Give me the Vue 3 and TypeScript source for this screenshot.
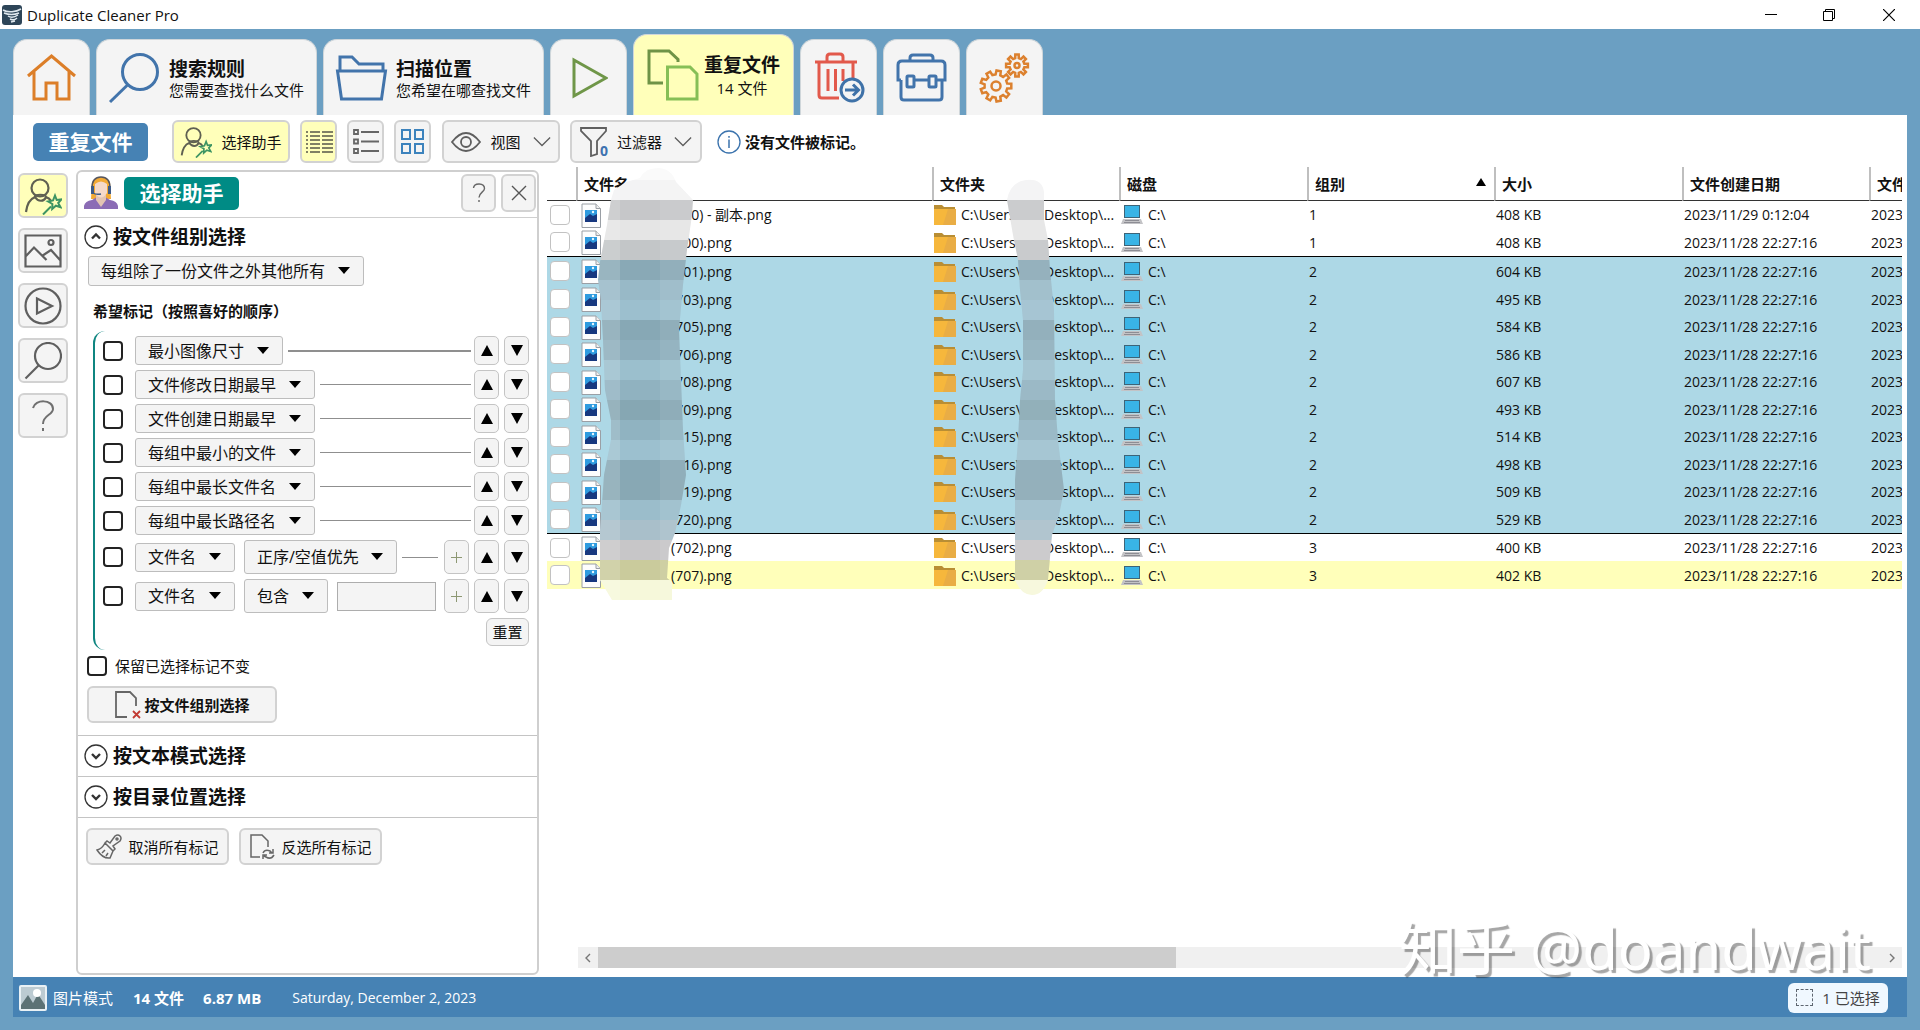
<script setup lang="ts">
import { ref } from 'vue'

interface FileRow {
  name: string
  size: string
  created: string
  selected?: boolean
}

interface FileGroup {
  id: number
  rows: FileRow[]
}

const defaultDate = '2023/11/28 22:27:16'
const row = (name: string, size: string, created = defaultDate, selected = false): FileRow => ({
  name,
  size,
  created,
  selected,
})

const groups: FileGroup[] = [
  { id: 1, rows: [row('(700) - 副本.png', '408 KB', '2023/11/29 0:12:04'), row('(700).png', '408 KB')] },
  {
    id: 2,
    rows: [
      row('(701).png', '604 KB'),
      row('(703).png', '495 KB'),
      row('(705).png', '584 KB'),
      row('(706).png', '586 KB'),
      row('(708).png', '607 KB'),
      row('(709).png', '493 KB'),
      row('(715).png', '514 KB'),
      row('(716).png', '498 KB'),
      row('(719).png', '509 KB'),
      row('(720).png', '529 KB'),
    ],
  },
  { id: 3, rows: [row('(702).png', '400 KB'), row('(707).png', '402 KB', defaultDate, true)] },
]

const simpleRules = ['最小图像尺寸', '文件修改日期最早', '文件创建日期最早', '每组中最小的文件', '每组中最长文件名', '每组中最长路径名']

const keyword = ref('')

/* Outline of a cog wheel as an SVG path. */
function gear(cx: number, cy: number, outer: number, inner: number, teeth: number): string {
  const step = (Math.PI * 2) / teeth
  const shape: [number, number][] = [
    [-0.3, inner],
    [-0.2, outer],
    [0.2, outer],
    [0.3, inner],
  ]
  const points: string[] = []
  for (let i = 0; i < teeth; i++) {
    for (const [offset, radius] of shape) {
      const angle = (i + offset) * step
      points.push(`${(cx + Math.cos(angle) * radius).toFixed(1)} ${(cy + Math.sin(angle) * radius).toFixed(1)}`)
    }
  }
  return `M${points.join('L')}Z`
}

/* Rows of the pixelated strips that hide private parts of the paths. */
const mosaic = [
  '#fafafa', '#f3f3f4', '#c6c7c9', '#e5e5e5', '#c3c6c8', '#89a9b6', '#98b9c7', '#9cbfce', '#87a8b5', '#8daebc',
  '#9bbfcd', '#90b2c0', '#86a7b3', '#90b3c1', '#9cc0cf', '#87a8b5', '#88a8b4', '#9bbdcb', '#a9bfca', '#c7c6c8',
  '#cacb9c', '#f6f8da',
]
</script>

<template>
  <div class="window">
    <svg class="defs" aria-hidden="true">
      <symbol id="wizard" viewBox="0 0 38 38">
        <g fill="none" stroke="#5f6052" stroke-width="2.2">
          <circle cx="16" cy="11" r="8.5" />
          <path d="M2 35C3 27 6 22 11 20C14 25 20 25 22 20C25 21 26 22 27 24M11 20C10 17 22 17 22 20" />
        </g>
        <g fill="none" stroke="#3d9463" stroke-width="2">
          <path d="M31 18.500l1.700 4.500 4.800-.6-3.300 3.600 2.300 4.200-4.600-1.500-3.700 3.300.2-5-4.300-2.500 4.900-1z" />
          <path d="M27 29.500L19 37.500" />
        </g>
      </symbol>
      <symbol id="image-file" viewBox="0 0 20 25">
        <path d="M1 1h14l4.500 4.500V24.500H1z" fill="#fdfdfd" stroke="#9a9fa5" />
        <path d="M15 1v4.500h4.500" fill="#eee" stroke="#9a9fa5" />
        <path d="M4 7h12v12H4z" fill="#2f9bdf" />
        <path d="M4 15l5-4 3 2 4-2v8H4z" fill="#17387f" />
        <circle cx="12" cy="9" r="1.200" fill="#e7f6ff" />
      </symbol>
      <symbol id="folder" viewBox="0 0 22 20">
        <path d="M0 0h8l2 2h11v5H0z" fill="#b98e34" />
        <path d="M0 4h22v16H0z" fill="#f6b73c" />
        <path d="M14 4h8v16H9z" fill="#e9ad45" />
      </symbol>
      <symbol id="laptop" viewBox="0 0 22 20">
        <path d="M3 0h16v13H3z" fill="#3d6478" />
        <path d="M4 1h14v11H4z" fill="#39b4e6" />
        <path d="M2 14h18l2 5H0z" fill="#c3c3c6" />
        <path d="M4 15.500h14M3 17.500h16" stroke="#8d8d94" />
      </symbol>
      <symbol id="chevron" viewBox="0 0 20 12">
        <path d="M1 1.500L10 10.500 19 1.500" fill="none" stroke="#5d5d5d" stroke-width="1.400" />
      </symbol>
    </svg>

    <header class="title-bar">
      <svg class="logo" viewBox="0 0 20 20" aria-hidden="true">
        <rect width="20" height="20" rx="3" fill="#2d4558" />
        <path d="M1 5C6 8 14 7 19 4M2 8C7 10 12 10 17 8M6 11C9 13 13 12 16 10M8 14c2 1 5 1 7-1M9 17l4-1" fill="none" stroke="#dfe8ee" stroke-width="1.500" />
      </svg>
      <h1>Duplicate Cleaner Pro</h1>
      <div class="window-controls">
        <button type="button" aria-label="最小化"><svg width="12" height="12" viewBox="0 0 12 12"><path d="M0 5.500H12" stroke="#000" /></svg></button>
        <button type="button" aria-label="还原"><svg width="12" height="12" viewBox="0 0 12 12"><path d="M.5 2.500H9.500V11.500H.5ZM2.500 2.500V.5H11.500V9.500H9.500" fill="none" stroke="#000" /></svg></button>
        <button type="button" aria-label="关闭"><svg width="12" height="12" viewBox="0 0 12 12"><path d="M0 0L12 12M12 0L0 12" stroke="#000" stroke-width="1.200" /></svg></button>
      </div>
    </header>

    <nav class="tabs">
      <button type="button" class="tab icon-only" aria-label="主页">
        <svg width="52" height="50" viewBox="0 0 52 50" fill="none" stroke="#dc7e28" stroke-width="3"><path d="M2 23L25.500 3 49 23M8 19V46H20V30H31V46H43V19" /></svg>
      </button>
      <button type="button" class="tab wide">
        <svg width="54" height="54" viewBox="0 0 54 54" fill="none" stroke="#4274ab" stroke-width="3"><circle cx="32" cy="21" r="17.500" /><path d="M19.500 34L2 51" /></svg>
        <span class="tab-text"><strong>搜索规则</strong><span>您需要查找什么文件</span></span>
      </button>
      <button type="button" class="tab wide">
        <svg width="54" height="54" viewBox="0 0 54 54" fill="none" stroke="#4274ab" stroke-width="3"><path d="M5 20V6H17L24 13H48V20M2.500 20H50.500L46.500 48H6.500Z" /></svg>
        <span class="tab-text"><strong>扫描位置</strong><span>您希望在哪查找文件</span></span>
      </button>
      <button type="button" class="tab icon-only" aria-label="开始扫描">
        <svg width="38" height="42" viewBox="0 0 38 42" fill="none" stroke="#6f9648" stroke-width="3"><path d="M4 3L36 21 4 39Z" /></svg>
      </button>
      <button type="button" class="tab active">
        <svg width="52" height="52" viewBox="0 0 52 52" fill="none" stroke-width="3"><path d="M16 34H2V2H22L31 10.500V13" stroke="#6f9346" /><path d="M20.500 18H43L50 25V50H20.500Z" stroke="#86bf56" /></svg>
        <span class="tab-text centered"><strong>重复文件</strong><span>14 文件</span></span>
      </button>
      <button type="button" class="tab icon-only" aria-label="删除文件">
        <svg width="52" height="52" viewBox="0 0 52 52" fill="none" stroke="#e2594b" stroke-width="3"><path d="M2 10H44M14 10V5q0-3 3-3h10q3 0 3 3V10M6 10V43q0 3 3 3H26M40 10V26M15 17V39M22.500 17V39M30 17V29" /><g stroke="#3f72a8"><circle cx="39" cy="38" r="11" fill="#f4f4f4" /><path d="M32 38H45M40 32.500L45.500 38 40 43.500" /></g></svg>
      </button>
      <button type="button" class="tab icon-only" aria-label="工具">
        <svg width="52" height="50" viewBox="0 0 52 50" fill="none" stroke="#4274ab" stroke-width="3"><path d="M14 8V5q0-3 3-3H34q3 0 3 3V8M5 27H2V12q0-4 4-4H45q4 0 4 4V27H41M18 27H33M5 27V44q0 3 3 3H43q3 0 3-3V27" /><rect x="11" y="23" width="7" height="11" rx="1" /><rect x="33" y="23" width="7" height="11" rx="1" /></svg>
      </button>
      <button type="button" class="tab icon-only" aria-label="选项">
        <svg width="52" height="52" viewBox="0 0 52 52" fill="none" stroke="#dc812f" stroke-width="2.500"><path :d="gear(17, 34, 15.5, 11.5, 9)" /><circle cx="17" cy="34" r="4.500" /><path :d="gear(38, 13.5, 11, 7.500, 8)" /><circle cx="38" cy="13.500" r="2.500" /></svg>
      </button>
    </nav>

    <main class="content">
      <div class="toolbar">
        <h2 class="badge blue">重复文件</h2>
        <button type="button" class="tool on assistant"><svg width="32" height="32"><use href="#wizard" /></svg>选择助手</button>
        <button type="button" class="tool square on" aria-label="列表">
          <svg width="28" height="22" viewBox="0 0 28 22" stroke="#57574a" stroke-width="1.500"><path v-for="y in 6" :key="y" :d="`M1 ${y * 4 - 3}h2M5 ${y * 4 - 3}h10M17 ${y * 4 - 3}h11`" /></svg>
        </button>
        <button type="button" class="tool square" aria-label="详细列表">
          <svg width="28" height="26" viewBox="0 0 28 26" fill="none" stroke="#666" stroke-width="1.800"><path v-for="y in 3" :key="y" :d="`M2 ${y * 9.5 - 8.5}h4v4h-4zM9 ${y * 9.5 - 6.5}h18`" /></svg>
        </button>
        <button type="button" class="tool square" aria-label="缩略图">
          <svg width="26" height="27" viewBox="0 0 26 27" fill="none" stroke="#3c83bd" stroke-width="2"><path d="M2 2h8v9H2zM15 2h8v9h-8zM2 16h8v9H2zM15 16h8v9h-8z" /></svg>
        </button>
        <button type="button" class="tool view">
          <svg width="30" height="22" viewBox="0 0 30 22" fill="none" stroke="#5f5f5f" stroke-width="1.800"><path d="M1 11Q15-7 29 11Q15 29 1 11Z" /><circle cx="15" cy="11" r="5" /></svg>
          视图
          <svg class="chev" width="18" height="11"><use href="#chevron" /></svg>
        </button>
        <button type="button" class="tool filter">
          <span class="funnel">
            <svg width="28" height="30" viewBox="0 0 28 30" fill="none" stroke="#5f5f5f" stroke-width="1.800"><path d="M1 1H26V4L17 14V27L11 29V14L1 4Z" /></svg>
            <b>0</b>
          </span>
          过滤器
          <svg class="chev" width="18" height="11"><use href="#chevron" /></svg>
        </button>
        <p class="notice">
          <svg width="24" height="24" viewBox="0 0 24 24" fill="none" stroke="#3b73ad"><circle cx="12" cy="12" r="11" stroke-width="1.300" /><path d="M12 9.500V18M12 6V7.800" stroke-width="1.500" /></svg>
          <strong>没有文件被标记。</strong>
        </p>
      </div>

      <div class="body">
        <aside class="rail">
          <button type="button" class="rail-button on" aria-label="选择助手"><svg width="38" height="38"><use href="#wizard" /></svg></button>
          <button type="button" class="rail-button" aria-label="图像预览">
            <svg width="38" height="34" viewBox="0 0 38 34" fill="none" stroke="#5f5f5f" stroke-width="2.200"><path d="M1.500 1.500H36.500V32.500H1.500ZM2 22L10 13.500 22.500 26M18 22L27 16 36 26" /><circle cx="27" cy="8.500" r="2.500" /></svg>
          </button>
          <button type="button" class="rail-button" aria-label="播放">
            <svg width="38" height="38" viewBox="0 0 38 38" fill="none" stroke="#5f5f5f" stroke-width="2.200"><circle cx="19" cy="19" r="17.500" /><path d="M13 11.500L28 19 13 26.500Z" /></svg>
          </button>
          <button type="button" class="rail-button" aria-label="搜索">
            <svg width="38" height="38" viewBox="0 0 38 38" fill="none" stroke="#5f5f5f" stroke-width="2.200"><circle cx="24" cy="14" r="13" /><path d="M14.500 23.500L1.500 36.500" /></svg>
          </button>
          <button type="button" class="rail-button" aria-label="帮助">
            <svg width="24" height="32" viewBox="0 0 24 32" fill="none" stroke="#707070" stroke-width="2"><path d="M2 8C4-1 22-1 22 9C22 15 12 15 12 24M12 28V31" /></svg>
          </button>
        </aside>

        <section class="panel">
          <header class="panel-head">
            <svg class="avatar" width="36" height="34" viewBox="0 0 36 34" aria-hidden="true">
              <path d="M9 6Q18-4 27 6L28 23H8Z" fill="#f3aa35" />
              <path d="M1 33V30Q2 25 9 24L14 21H22L27 24Q34 25 35 30V33Z" fill="#8b6cb5" />
              <path d="M13 19H23V24L18 31L13 24Z" fill="#e3c4b2" />
              <path d="M12 8Q18 3 24 8V17Q18 26 12 17Z" fill="#f5d9c9" />
              <path d="M9 12Q9 1 18 1T27 12" fill="none" stroke="#56565e" stroke-width="1.500" />
              <path d="M8 10h3v8H8zM25 10h3v8h-3z" fill="#3d5a86" />
              <path d="M10 17Q13 19 18 18" fill="none" stroke="#3d5a86" stroke-width="1.500" />
            </svg>
            <h2 class="badge teal">选择助手</h2>
            <div class="panel-actions">
              <button type="button" aria-label="帮助"><svg width="14" height="20" viewBox="0 0 14 20" fill="none" stroke="#666" stroke-width="1.400"><path d="M1.500 5C2-.5 12.500-.5 12.500 5.500C12.500 9 7 9.500 7 14.500M7 17V19" /></svg></button>
              <button type="button" aria-label="关闭"><svg width="16" height="16" viewBox="0 0 16 16"><path d="M1 1L15 15M15 1L1 15" stroke="#555" stroke-width="1.400" /></svg></button>
            </div>
          </header>

          <div class="section open">
            <button type="button" class="section-title">
              <svg width="24" height="24" viewBox="0 0 24 24" fill="none" stroke="#333"><circle cx="12" cy="12" r="11" stroke-width="1.300" /><path d="M8 13.500L12 9.500 16 13.500" stroke-width="2.400" /></svg>
              按文件组别选择
            </button>
            <label class="picker main-picker">
              <select aria-label="标记方式"><option>每组除了一份文件之外其他所有</option></select>
            </label>
            <h3>希望标记（按照喜好的顺序）</h3>

            <div class="rules">
              <div v-for="(rule, i) in simpleRules" :key="rule" class="rule">
                <input type="checkbox" class="check" :aria-label="rule" />
                <label class="picker"><select :aria-label="`规则 ${i + 1}`"><option>{{ rule }}</option></select></label>
                <span class="line" :class="{ strong: i === 0 }"></span>
                <button type="button" class="move" aria-label="上移"><i class="up"></i></button>
                <button type="button" class="move" aria-label="下移"><i class="down"></i></button>
              </div>
              <div class="rule tall">
                <input type="checkbox" class="check" aria-label="文件名排序" />
                <label class="picker"><select aria-label="排序字段"><option>文件名</option></select></label>
                <label class="picker full"><select aria-label="排序方式"><option>正序/空值优先</option></select></label>
                <span class="line"></span>
                <button type="button" class="move plus" aria-label="添加"><svg width="11" height="11" viewBox="0 0 11 11"><path d="M5.500 0V11M0 5.500H11" stroke="#8d9873" /></svg></button>
                <button type="button" class="move" aria-label="上移"><i class="up"></i></button>
                <button type="button" class="move" aria-label="下移"><i class="down"></i></button>
              </div>
              <div class="rule tall">
                <input type="checkbox" class="check" aria-label="文件名条件" />
                <label class="picker"><select aria-label="条件字段"><option>文件名</option></select></label>
                <label class="picker full"><select aria-label="条件"><option>包含</option></select></label>
                <input v-model="keyword" type="text" class="keyword" aria-label="关键字" />
                <button type="button" class="move plus" aria-label="添加"><svg width="11" height="11" viewBox="0 0 11 11"><path d="M5.500 0V11M0 5.500H11" stroke="#8d9873" /></svg></button>
                <button type="button" class="move" aria-label="上移"><i class="up"></i></button>
                <button type="button" class="move" aria-label="下移"><i class="down"></i></button>
              </div>
              <button type="button" class="reset">重置</button>
            </div>

            <label class="keep"><input type="checkbox" class="check" />保留已选择标记不变</label>
            <button type="button" class="action apply">
              <svg width="28" height="30" viewBox="0 0 28 30" fill="none"><path d="M13 27H2V2H16L22 8V16" stroke="#666" stroke-width="1.800" /><path d="M19 21L26 28M26 21L19 28" stroke="#c23b33" stroke-width="1.800" /></svg>
              <strong>按文件组别选择</strong>
            </button>
          </div>

          <div class="section">
            <button type="button" class="section-title">
              <svg width="24" height="24" viewBox="0 0 24 24" fill="none" stroke="#333"><circle cx="12" cy="12" r="11" stroke-width="1.300" /><path d="M8 10L12 14 16 10" stroke-width="2.400" /></svg>
              按文本模式选择
            </button>
          </div>
          <div class="section">
            <button type="button" class="section-title">
              <svg width="24" height="24" viewBox="0 0 24 24" fill="none" stroke="#333"><circle cx="12" cy="12" r="11" stroke-width="1.300" /><path d="M8 10L12 14 16 10" stroke-width="2.400" /></svg>
              按目录位置选择
            </button>
          </div>

          <div class="mark-actions">
            <button type="button" class="action">
              <svg width="26" height="26" viewBox="0 0 26 26" fill="none" stroke="#666" stroke-width="1.500"><path d="M9 9L17 17L14 24Q7 25 1 16Q6 15 9 9ZM9 9L11 7 14 9 19 2Q22 0 24 2T24 7L17 12L19 15 17 17M6 19L9 16M10 22L12 19" /><circle cx="21" cy="5" r="1" /></svg>
              取消所有标记
            </button>
            <button type="button" class="action">
              <svg width="26" height="27" viewBox="0 0 26 27" fill="none" stroke="#666" stroke-width="1.500"><path d="M11 24H2V2H13L19 8V14M14 20Q16 16 21 18L23 20M24 16V20H20M25 22Q22 27 17 24L15 23M14 26V22H18" /></svg>
              反选所有标记
            </button>
          </div>
        </section>

        <section class="results">
          <div class="table-wrap">
            <table>
              <colgroup>
                <col class="c-check" /><col class="c-name" /><col class="c-a" /><col class="c-b" /><col class="c-a" /><col class="c-b" /><col class="c-a" /><col class="c-b" />
              </colgroup>
              <thead>
                <tr>
                  <th></th>
                  <th>文件名</th>
                  <th>文件夹</th>
                  <th>磁盘</th>
                  <th><span class="sorted">组别<i></i></span></th>
                  <th>大小</th>
                  <th>文件创建日期</th>
                  <th>文件修改日期</th>
                </tr>
              </thead>
              <tbody v-for="group in groups" :key="group.id" :class="`group-${group.id}`">
                <tr v-for="file in group.rows" :key="file.name" :class="{ selected: file.selected }">
                  <td class="cell-check"><input type="checkbox" :aria-label="file.name" /></td>
                  <td><span class="cell file"><svg width="20" height="25"><use href="#image-file" /></svg>{{ file.name }}</span></td>
                  <td><span class="cell folder"><svg width="22" height="20"><use href="#folder" /></svg><span class="root">C:\Users\</span>Desktop\...</span></td>
                  <td><span class="cell disk"><svg width="22" height="20"><use href="#laptop" /></svg>C:\</span></td>
                  <td>{{ group.id }}</td>
                  <td>{{ file.size }}</td>
                  <td>{{ file.created }}</td>
                  <td>{{ defaultDate }}</td>
                </tr>
              </tbody>
            </table>
            <svg class="mosaic" width="540" height="440" viewBox="547 167 540 440" aria-hidden="true">
              <defs>
                <clipPath id="strip-a"><path d="M614 190L626 182 640 178Q645 168 658 168T676 182L693 200 692 215 687 250 683 285 679 330 681 380 683 430 686 475 681 505 675 533 669 548 667 578 672 582V600H612L600 580V530L603 490 604 475 611 440 611 420 605 390 603 340 601 300 598 280 600 262 607 225 611 200Z" /></clipPath>
                <clipPath id="strip-b"><path d="M1007 200Q1010 182 1026 180T1044 192V220L1048 240 1050 270 1054 310 1055 400 1058 440 1064 490 1059 515 1052 535 1048 580Q1043 595 1032 595T1015 580V480L1018 440 1020 400 1023 370V320L1020 290 1018 260 1013 235Z" /></clipPath>
              </defs>
              <g v-for="strip in ['a', 'b']" :key="strip" :clip-path="`url(#strip-${strip})`">
                <rect v-for="(fill, i) in mosaic" :key="i" :x="strip === 'a' ? 590 : 1000" :y="160 + i * 20" width="110" height="20" :fill="fill" />
                <rect v-if="strip === 'a'" x="590" y="180" width="30" height="420" fill="#fff" opacity="0.140" />
                <rect v-if="strip === 'a'" x="660" y="180" width="40" height="420" fill="#fff" opacity="0.080" />
                <rect v-if="strip === 'b'" x="1000" y="160" width="80" height="440" fill="#fff" opacity="0.100" />
              </g>
            </svg>
          </div>
          <div class="scrollbar" aria-hidden="true">
            <svg width="20" height="10" viewBox="0 0 20 10" fill="none" stroke="#777" stroke-width="1.400"><path d="M12 1L8 5 12 9" /></svg>
            <div class="track"><div class="thumb"></div></div>
            <svg width="20" height="10" viewBox="0 0 20 10" fill="none" stroke="#777" stroke-width="1.400"><path d="M8 1L12 5 8 9" /></svg>
          </div>
        </section>
      </div>
      <p class="watermark">知乎 @doandwait</p>
    </main>

    <footer class="status">
      <svg width="28" height="26" viewBox="0 0 28 26" aria-hidden="true"><rect x="1" y="1" width="26" height="24" rx="1" fill="#bccbd2" stroke="#e9f1f5" stroke-width="2" /><path d="M2 24V20L9 10 14 18 19 9 26 20V24Z" fill="#5c7275" /><circle cx="18" cy="8" r="4" fill="#fff" /></svg>
      <span>图片模式</span>
      <strong>14 文件</strong>
      <strong>6.87 MB</strong>
      <time>Saturday, December 2, 2023</time>
      <button type="button" class="selection"><i></i>1 已选择</button>
    </footer>
  </div>
</template>

<style>
body {
  margin: 0;
}
</style>

<style scoped>
* {
  box-sizing: border-box;
}

.window {
  display: flex;
  flex-direction: column;
  min-height: 100vh;
  padding-bottom: 13px;
  background: #6b9fc2;
  color: #111;
  font: 15px/20px 'Open Sans', 'Noto Sans CJK SC', sans-serif;
}

button,
select,
input {
  margin: 0;
  font: inherit;
  color: inherit;
}

button {
  display: flex;
  align-items: center;
  justify-content: center;
  padding: 0;
  border: 2px solid #d2d2d2;
  border-radius: 6px;
  background: #f4f4f4;
  white-space: nowrap;
}

h1,
h2,
h3,
p {
  margin: 0;
}

svg {
  flex: none;
  display: block;
}

.defs {
  position: absolute;
  width: 0;
  height: 0;
}

.title-bar {
  display: flex;
  align-items: center;
  height: 29px;
  padding-left: 2px;
  background: #fff;
}

.logo {
  width: 20px;
  height: 20px;
  margin-right: 5px;
}

h1 {
  font-size: 15px;
  font-weight: 400;
}

.window-controls {
  display: flex;
  margin-left: auto;
}

.window-controls button {
  width: 58px;
  height: 28px;
  border: 0;
  background: none;
}

.window-controls button:last-child {
  width: 62px;
}

.tabs {
  display: flex;
  align-items: flex-end;
  gap: 6px;
  height: 86px;
  padding: 0 13px;
}

.tab {
  height: 76px;
  border: 1px solid #cfd6da;
  border-bottom: 0;
  border-radius: 14px 14px 0 0;
}

.tab.icon-only {
  width: 77px;
}

.tab.wide {
  justify-content: flex-start;
  gap: 7px;
  width: 221px;
  padding-left: 11px;
}

.tab.active {
  gap: 5px;
  width: 161px;
  height: 81px;
  background: #ffffba;
}

.tab-text {
  display: flex;
  flex-direction: column;
  padding-top: 2px;
  text-align: left;
}

.tab-text.centered {
  gap: 2px;
  text-align: center;
}

.tab-text strong {
  font-size: 19px;
  line-height: 22px;
}

.content {
  position: relative;
  display: flex;
  flex: 1;
  flex-direction: column;
  margin: 0 13px;
  background: #fff;
}

.toolbar {
  display: flex;
  align-items: center;
  gap: 10px;
  padding: 5px 0 0 20px;
}

.badge {
  display: flex;
  align-items: center;
  justify-content: center;
  width: 115px;
  border-radius: 5px;
  color: #fff;
  font-size: 21px;
}

.badge.blue {
  height: 38px;
  margin-right: 14px;
  background: #4682b4;
}

.badge.teal {
  height: 33px;
  background: #008b85;
}

.tool {
  gap: 9px;
  height: 43px;
}

.on {
  background: #ffffba;
}

.tool.assistant {
  width: 118px;
}

.tool.square {
  width: 37px;
}

.tool.view {
  width: 118px;
  margin-left: 1px;
}

.tool.filter {
  width: 132px;
}

.tool .chev {
  margin-left: 3px;
}

.funnel {
  position: relative;
}

.funnel b {
  position: absolute;
  right: 0;
  bottom: -4px;
  color: #3d72b0;
  font-size: 14px;
}

.notice {
  display: flex;
  align-items: center;
  gap: 4px;
  margin-left: 5px;
}

.body {
  display: flex;
  flex: 1;
  gap: 8px;
  padding: 4px 5px 2px;
}

.rail {
  display: flex;
  flex-direction: column;
  gap: 10px;
  padding-top: 6px;
}

.rail-button {
  width: 50px;
  height: 45px;
}

.panel {
  flex: 0 0 463px;
  min-width: 0;
  margin-top: 3px;
  border: 2px solid #cfcfcf;
  border-radius: 6px;
}

.panel-head {
  display: flex;
  align-items: center;
  gap: 5px;
  height: 46px;
  padding: 0 1px 3px 5px;
  border-bottom: 1px solid #cfcfcf;
}

.panel-actions {
  display: flex;
  gap: 5px;
  margin-left: auto;
}

.panel-actions button {
  width: 35px;
  height: 38px;
}

.section {
  border-bottom: 1px solid #c4c4c4;
}

.section.open {
  padding-bottom: 12px;
}

.section-title {
  justify-content: flex-start;
  gap: 5px;
  width: 100%;
  height: 40px;
  padding-left: 6px;
  border: 0;
  background: none;
  font-size: 19px;
  font-weight: 700;
}

.section.open .section-title {
  height: 37px;
}

.picker {
  position: relative;
  display: flex;
  height: 29px;
}

.picker::after {
  position: absolute;
  top: calc(50% - 4px);
  right: 14px;
  border: solid transparent;
  border-width: 7px 6px 0;
  border-top-color: #000;
  content: '';
  pointer-events: none;
}

select {
  appearance: none;
  height: 100%;
  padding: 0 37px 0 12px;
  border: 1px solid #bdbdbd;
  border-radius: 3px;
  background: #f4f4f4;
  font-size: 16px;
}

.main-picker {
  width: fit-content;
  height: 30px;
  margin: 1px 0 0 10px;
}

h3 {
  margin: 15px 0 0 15px;
  font-size: 15px;
}

.rules {
  display: flex;
  flex-direction: column;
  gap: 5px;
  margin: 10px 8px 0 15px;
  padding: 5px 0 4px 7px;
  border-left: 2px solid #0f8580;
  border-radius: 12px 0 0 12px;
}

.rule {
  display: flex;
  align-items: center;
  gap: 5px;
  height: 29px;
}

.rule.tall {
  height: 34px;
}

.check {
  appearance: none;
  flex: none;
  width: 20px;
  height: 20px;
  border: 2px solid #222;
  border-radius: 4px;
  background: #fff;
}

.rule .check {
  margin: 0 7px 0 1px;
}

.picker.full {
  height: 100%;
  margin-left: 4px;
}

.line {
  flex: 1;
  height: 1px;
  margin-right: -2px;
  background: #8f8f8f;
}

.line.strong {
  height: 2px;
}

.move {
  flex: none;
  width: 25px;
  height: 100%;
  border: 1px solid #c4c4c4;
  border-radius: 5px;
}

.plus {
  margin-left: 3px;
}

.up,
.down {
  border: solid transparent;
  border-width: 0 6px 11px;
  border-bottom-color: #000;
}

.down {
  border-width: 11px 6px 0;
  border-top-color: #000;
}

.keyword {
  flex: 1;
  width: 0;
  min-width: 0;
  height: 29px;
  margin-left: 4px;
  border: 1px solid #adadad;
  background: #f4f4f4;
}

.reset {
  align-self: flex-end;
  width: 43px;
  height: 28px;
  border: 1px solid #c4c4c4;
}

.keep {
  display: flex;
  align-items: center;
  gap: 8px;
  margin: 6px 0 0 9px;
}

.action {
  gap: 6px;
  width: 143px;
  height: 37px;
}

.apply {
  gap: 2px;
  width: 190px;
  margin: 10px 0 0 9px;
}

.mark-actions {
  display: flex;
  gap: 10px;
  padding: 10px 8px;
}

.results {
  display: flex;
  flex: 1;
  flex-direction: column;
  min-width: 0;
}

.table-wrap {
  position: relative;
  padding-bottom: 16px;
  overflow: hidden;
}

table {
  width: 1510px;
  border-spacing: 0;
  table-layout: fixed;
}

.c-check {
  width: 29px;
}

.c-name {
  width: 356px;
}

.c-a {
  width: 187px;
}

.c-b {
  width: 188px;
}

th {
  height: 34px;
  padding: 0 8px 0 6px;
  border-bottom: 1px solid #333;
  border-left: 2px solid #bfbfbf;
  text-align: left;
}

th:first-child {
  border-left: 0;
}

.sorted {
  display: flex;
  justify-content: space-between;
}

.sorted i {
  margin-top: 4px;
  height: 8px;
  border: solid transparent;
  border-width: 0 5px 8px;
  border-bottom-color: #000;
}

td {
  height: 27px;
  padding: 1px 2px 0;
  overflow: hidden;
  font-size: 14px;
  white-space: nowrap;
}

tr:nth-child(even) td {
  height: 28px;
}

tbody + tbody tr:first-child td {
  height: 28px;
  border-top: 1px solid #000;
}

.group-2 {
  background: #add8e6;
}

.group-2 tr:first-child td {
  height: 29px;
}

.selected {
  background: #ffffba;
}

.cell-check {
  padding: 0 3px;
}

.cell-check input {
  appearance: none;
  display: block;
  width: 20px;
  height: 20px;
  border: 1px solid #c2c2c2;
  border-radius: 4px;
  background: #fff;
}

.cell {
  display: flex;
  align-items: center;
  gap: 5px;
}

.cell.file {
  gap: 70px;
  padding-left: 3px;
}

.cell.folder {
  gap: 0;
}

.root {
  width: 83px;
  padding-left: 5px;
  margin-right: 5px;
}

.mosaic {
  position: absolute;
  top: 0;
  left: 0;
}

.scrollbar {
  display: flex;
  align-items: center;
  height: 21px;
  margin: auto 0 7px 31px;
  background: #f0f0f0;
}

.track {
  flex: 1;
}

.thumb {
  width: 45%;
  height: 21px;
  background: #cdcdcd;
}

.watermark {
  position: absolute;
  right: 36px;
  bottom: -7px;
  color: #fff;
  font-family: 'Noto Sans', 'Noto Sans CJK SC', sans-serif;
  font-size: 58px;
  line-height: 72px;
  text-shadow: 3px 3px 1px rgba(0, 0, 0, 0.35);
  white-space: nowrap;
  pointer-events: none;
}

.status {
  display: flex;
  align-items: center;
  height: 40px;
  margin: 0 13px;
  padding: 1px 19px 0 6px;
  background: #4682b4;
  color: #fff;
}

.status span {
  margin: 0 20px 0 6px;
}

.status strong {
  margin-right: 19px;
}

.status time {
  margin-left: 12px;
  font-size: 14px;
}

.selection {
  gap: 9px;
  width: 100px;
  height: 30px;
  margin-left: auto;
  border: 0;
  background: #f0f8ff;
  color: #444;
}

.selection i {
  width: 17px;
  height: 17px;
  border: 1px dashed #5e6670;
}
</style>
